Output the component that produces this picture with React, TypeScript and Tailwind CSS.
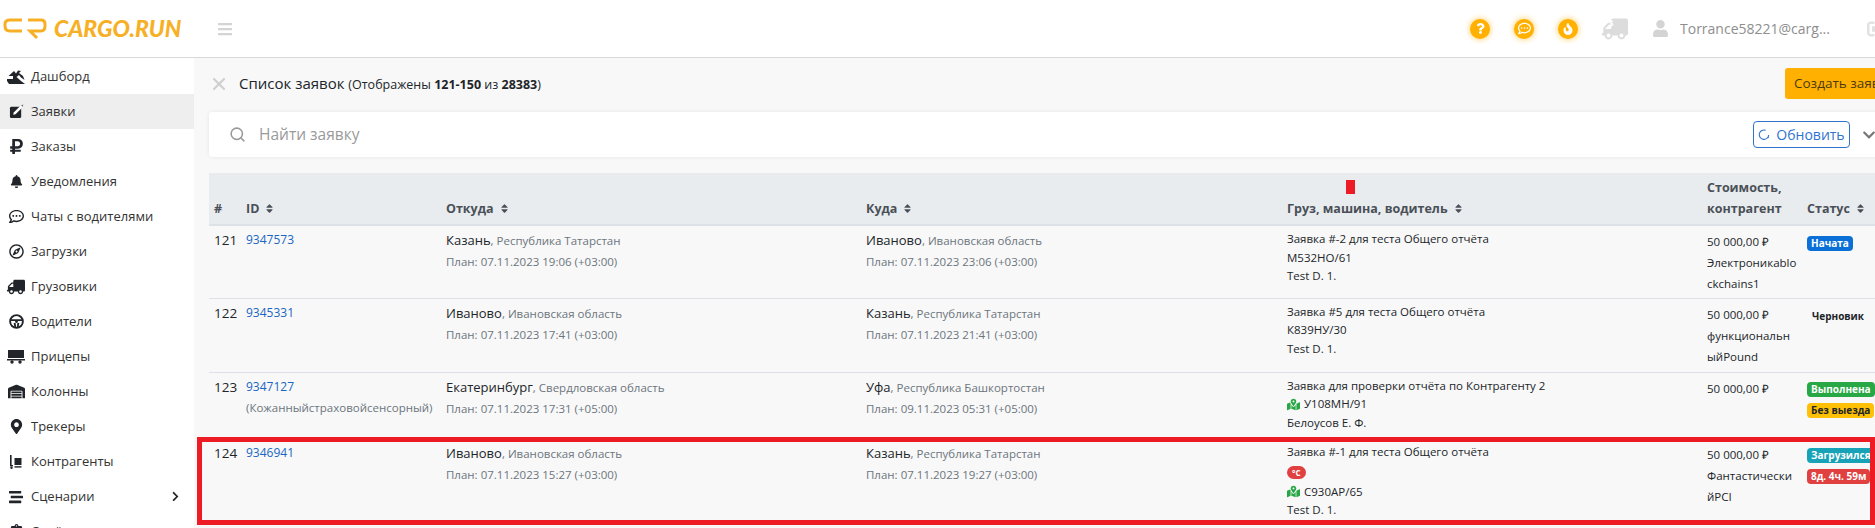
import {
  FaBars,
  FaBell,
  FaChevronDown,
  FaChevronRight,
  FaClipboardList,
  FaFire,
  FaMapMarkedAlt,
  FaMapMarkerAlt,
  FaQuestion,
  FaRegCommentDots,
  FaRegCompass,
  FaRubleSign,
  FaSignOutAlt,
  FaSort,
  FaStream,
  FaTruck,
  FaUser,
  FaWarehouse,
} from "react-icons/fa";
import { Search, X } from "lucide-react";

function DashIcon() {
  return (
    <svg viewBox="0 0 18 14" className="w-[18px] h-[14px]" fill="#212529">
      <path d="M0 9 L6 9 L6 6 L1.5 6 L7 1 L9 3.5 L11 0.5 L14 1 L12 3 L16 6 L17.5 10 L14 7.5 L12 5 L9.5 7 L14 11 L18 14 L2 14 L0 11 Z" />
    </svg>
  );
}

function OrderIcon() {
  return (
    <svg viewBox="0 0 16 16" className="w-[15px] h-[15px]">
      <rect x="1" y="3" width="12" height="12" rx="1.5" fill="#212529" />
      <path d="M4.5 11.5 L5 9 L12.5 1.5 L14.5 3.5 L7 11 Z" fill="#fff" />
      <path d="M12.8 1.2 L15.2 0.6 L14.8 3.2 Z" fill="#777" />
    </svg>
  );
}

function WheelIcon() {
  return (
    <svg viewBox="0 0 16 16" className="w-[15px] h-[15px]" fill="none" stroke="#212529" strokeWidth="2">
      <circle cx="8" cy="8" r="6.8" />
      <path d="M1.5 6.5 H14.5 M6 9.5 L6.8 14.5 M10 9.5 L9.2 14.5" />
      <circle cx="8" cy="8" r="1.5" fill="#212529" stroke="none" />
    </svg>
  );
}

function TrailerIcon() {
  return (
    <svg viewBox="0 0 18 14" className="w-[18px] h-[14px]" fill="#212529">
      <rect x="1" y="0" width="16" height="8" />
      <rect x="0" y="9" width="18" height="1.5" />
      <circle cx="5" cy="12" r="1.7" />
      <circle cx="13" cy="12" r="1.7" />
    </svg>
  );
}

function DollyIcon() {
  return (
    <svg viewBox="0 0 12 14" className="w-[12px] h-[14px]" fill="#212529">
      <rect x="0" y="0" width="1.6" height="10" />
      <rect x="0" y="10" width="3" height="1.4" />
      <rect x="4.5" y="3" width="7" height="7" />
      <rect x="4.5" y="11.2" width="7" height="1.4" />
      <circle cx="1.5" cy="12.8" r="1.2" />
    </svg>
  );
}

const menu = [
  { label: "Дашборд", icon: <DashIcon /> },
  { label: "Заявки", icon: <OrderIcon />, active: true },
  { label: "Заказы", icon: <FaRubleSign className="text-[17px]" /> },
  { label: "Уведомления", icon: <FaBell className="text-[13px]" /> },
  { label: "Чаты с водителями", icon: <FaRegCommentDots className="text-[15px]" /> },
  { label: "Загрузки", icon: <FaRegCompass className="text-[15px]" /> },
  { label: "Грузовики", icon: <FaTruck className="text-[18px] -scale-x-100" /> },
  { label: "Водители", icon: <WheelIcon /> },
  { label: "Прицепы", icon: <TrailerIcon /> },
  { label: "Колонны", icon: <FaWarehouse className="text-[17px]" /> },
  { label: "Трекеры", icon: <FaMapMarkerAlt className="text-[15px]" /> },
  { label: "Контрагенты", icon: <DollyIcon /> },
  { label: "Сценарии", icon: <FaStream className="text-[14px]" />, arrow: true },
  { label: "Отчёты", icon: <FaClipboardList className="text-[15px]" /> },
];

function Place({ city, region, plan }: { city: string; region: string; plan: string }) {
  return (
    <>
      <div className="text-[13px] leading-[20px] text-[#212529]">
        {city}
        <span className="text-[11.5px] text-[#6c757d]">, {region}</span>
      </div>
      <div className="text-[11.5px] leading-[20px] mt-[1px] text-[#6c757d]">План: {plan}</div>
    </>
  );
}

function Head({ label, className = "" }: { label: React.ReactNode; className?: string }) {
  return (
    <th className={`px-[5px] pb-[5px] align-bottom text-left text-[12.5px] leading-[21px] font-bold text-[#495057] ${className}`}>
      {label}
    </th>
  );
}

function Sort() {
  return <FaSort className="inline-block text-[11px] ml-[5px] mb-[2px] text-[#495057]" />;
}

function Badge({ text, className }: { text: string; className: string }) {
  return (
    <div className={`w-fit rounded-[4px] px-[4px] text-[10px] leading-[15px] font-bold mb-[6px] whitespace-nowrap ${className}`}>
      {text}
    </div>
  );
}

function Cargo({ lines, tracked, temp }: { lines: string[]; tracked?: boolean; temp?: boolean }) {
  return (
    <div className="text-[11.5px] leading-[18.5px] text-[#212529]">
      <div>{lines[0]}</div>
      {temp && (
        <div className="h-[21px] flex items-center">
          <span className="rounded-full bg-[#e0403f] text-white text-[8px] font-bold leading-[13px] px-[5px]">°C</span>
        </div>
      )}
      <div className="flex items-center">
        {tracked && <FaMapMarkedAlt className="text-[13px] text-[#28a745] mr-[4px]" />}
        {lines[1]}
      </div>
      <div>{lines[2]}</div>
    </div>
  );
}

function Cost({ lines }: { lines: string[] }) {
  return (
    <div className="text-[11.5px] leading-[21px] text-[#212529] break-all pt-[1px]">
      {lines.map((l) => (
        <div key={l}>{l}</div>
      ))}
    </div>
  );
}

const cell = "px-[5px] align-top pt-[4px]";

export default function App() {
  return (
    <div className="relative w-[1875px] h-[528px] overflow-hidden bg-[#f8f8f8] font-['Open_Sans',sans-serif] text-[#212529]">
      <header className="h-[58px] bg-white border-b border-[#d9d9d9] flex items-center">
        <svg viewBox="0 0 46 24" className="w-[46px] h-[24px] ml-[3px]" fill="none" stroke="#f7b025" strokeWidth="3">
          <path d="M19 3 H7 Q2 3 2 7 V9 Q2 14 7 14 H19" />
          <path d="M25 3 H38 Q42 3 42 7 V9 Q42 14 38 14 H27 L34 21" />
        </svg>
        <span className="ml-[5px] w-[131px] font-['Lato',sans-serif] italic font-black text-[23px] text-[#f7b025] whitespace-nowrap">
          CARGO.RUN
        </span>
        <FaBars className="ml-[32px] text-[16px] text-[#d4d4d4]" />

        <div className="ml-auto flex items-center">
          <div className="w-[20px] h-[20px] rounded-full bg-[#ffb000] shadow-[0_0_6px_#ffc64d] flex items-center justify-center">
            <FaQuestion className="text-white text-[11px]" />
          </div>
          <div className="ml-[24px] w-[20px] h-[20px] rounded-full bg-[#ffb000] shadow-[0_0_6px_#ffc64d] flex items-center justify-center">
            <FaRegCommentDots className="text-white text-[13px]" />
          </div>
          <div className="ml-[24px] w-[20px] h-[20px] rounded-full bg-[#ffb000] shadow-[0_0_6px_#ffc64d] flex items-center justify-center">
            <FaFire className="text-white text-[12px]" />
          </div>
          <div className="ml-[24px] relative">
            <FaTruck className="text-[26px] text-[#dcdcdc] -scale-x-100" />
            <span className="absolute left-[7px] top-[3px] text-[8px] font-bold leading-[10px] text-white">$</span>
          </div>
          <FaUser className="ml-[24px] text-[17px] text-[#d4d4d4]" />
          <span className="ml-[11px] w-[152px] text-[14px] text-[#8e8e8e] whitespace-nowrap">Torrance58221@carg...</span>
          <FaSignOutAlt className="ml-[35px] -mr-[12px] text-[20px] text-[#e2e2e2]" />
        </div>
      </header>

      <div className="flex">
        <aside className="w-[194px] h-[470px] shrink-0 bg-white pt-[1px] overflow-hidden">
          {menu.map((m) => (
            <div
              key={m.label}
              className={`relative h-[35px] flex items-center text-[13px] text-[#333] ${m.active ? "bg-[#eeeeee]" : ""}`}
            >
              <span className="w-[31px] shrink-0 flex justify-center pl-[1px] text-[#212529]">{m.icon}</span>
              {m.label}
              {m.arrow && <FaChevronRight className="absolute left-[170px] text-[11px] text-[#212529]" />}
            </div>
          ))}
        </aside>

        <main className="pl-[15px] w-[1711px] shrink-0">
          <div className="h-[31px] mt-[10px] flex items-center">
            <X className="w-[20px] h-[20px] text-[#cfcfcf]" strokeWidth={2.5} />
            <h1 className="ml-[10px] text-[15px] text-[#212529]">
              Список заявок{" "}
              <span className="text-[12.5px]">
                (Отображены <b className="text-[12.5px]">121-150</b> из <b className="text-[12.5px]">28383</b>)
              </span>
            </h1>
            <button className="ml-auto w-[120px] h-[31px] rounded-[3px] bg-[#ffb000] text-left pl-[9px] text-[13.5px] text-[#4d3b10] whitespace-nowrap">
              Создать заявку
            </button>
          </div>

          <div className="mt-[13px] h-[45px] bg-white rounded-[3px] shadow-[0_0_4px_rgba(0,0,0,0.08)] flex items-center pl-[20px] pr-[29px]">
            <Search className="w-[17px] h-[17px] text-[#999]" strokeWidth={2.2} />
            <span className="ml-[13px] text-[15.5px] text-[#9a9a9a]">Найти заявку</span>
            <button className="ml-auto w-[97px] h-[27px] rounded-[4px] border border-[#2f73cf] text-[#2f73cf] text-[14px] flex items-center justify-center gap-[6px]">
              <svg viewBox="0 0 14 14" className="w-[12px] h-[12px]" fill="none" stroke="#2f73cf" strokeWidth="1.3">
                <path d="M9 1.5 A5.5 5.5 0 1 0 12.5 7" />
                <circle cx="12.2" cy="9.5" r="0.7" fill="#2f73cf" stroke="none" />
              </svg>
              Обновить
            </button>
            <FaChevronDown className="ml-[12px] text-[14px] text-[#777]" />
          </div>

          <table className="mt-[16px] table-fixed border-collapse w-[1696px]">
            <colgroup>
              <col className="w-[32px]" />
              <col className="w-[200px]" />
              <col className="w-[420px]" />
              <col className="w-[421px]" />
              <col className="w-[420px]" />
              <col className="w-[100px]" />
              <col className="w-[103px]" />
            </colgroup>
            <thead>
              <tr className="h-[52px] bg-[#e9ecef] border-b-2 border-[#dee2e6]">
                <Head label="#" />
                <Head label={<>ID<Sort /></>} />
                <Head label={<>Откуда<Sort /></>} />
                <Head label={<>Куда<Sort /></>} />
                <Head label={<>Груз, машина, водитель<Sort /></>} />
                <Head label={<>Стоимость,<br />контрагент</>} />
                <Head label={<>Статус<Sort /></>} />
              </tr>
            </thead>
            <tbody>
              <tr className="h-[73px] border-b border-[#dee2e6]">
                <td className={`${cell} text-[13.5px]`}>121</td>
                <td className={`${cell} text-[12px] leading-[20px] text-[#1a66c0]`}>9347573</td>
                <td className={cell}>
                  <Place city="Казань" region="Республика Татарстан" plan="07.11.2023 19:06 (+03:00)" />
                </td>
                <td className={cell}>
                  <Place city="Иваново" region="Ивановская область" plan="07.11.2023 23:06 (+03:00)" />
                </td>
                <td className={cell}>
                  <Cargo lines={["Заявка #-2 для теста Общего отчёта", "М532НО/61", "Test D. 1."]} />
                </td>
                <td className={cell}>
                  <Cost lines={["50 000,00 ₽", "Электроникаblockchains1"]} />
                </td>
                <td className={cell}>
                  <Badge text="Начата" className="bg-[#0b6fd8] text-white mt-[6px]" />
                </td>
              </tr>
              <tr className="h-[74px] border-b border-[#dee2e6]">
                <td className={`${cell} text-[13.5px]`}>122</td>
                <td className={`${cell} text-[12px] leading-[20px] text-[#1a66c0]`}>9345331</td>
                <td className={cell}>
                  <Place city="Иваново" region="Ивановская область" plan="07.11.2023 17:41 (+03:00)" />
                </td>
                <td className={cell}>
                  <Place city="Казань" region="Республика Татарстан" plan="07.11.2023 21:41 (+03:00)" />
                </td>
                <td className={cell}>
                  <Cargo lines={["Заявка #5 для теста Общего отчёта", "К839НУ/30", "Test D. 1."]} />
                </td>
                <td className={cell}>
                  <Cost lines={["50 000,00 ₽", "функциональныйPound"]} />
                </td>
                <td className={cell}>
                  <Badge text="Черновик" className="text-[#212529] mt-[6px] ml-[1px]" />
                </td>
              </tr>
              <tr className="h-[67px]">
                <td className={`${cell} text-[13.5px]`}>123</td>
                <td className={`${cell} text-[12px] leading-[20px] text-[#1a66c0]`}>
                  9347127
                  <div className="mt-[1px] text-[11.5px] text-[#6c757d] whitespace-nowrap">(Кожанныйстраховойсенсорный)</div>
                </td>
                <td className={cell}>
                  <Place city="Екатеринбург" region="Свердловская область" plan="07.11.2023 17:31 (+05:00)" />
                </td>
                <td className={cell}>
                  <Place city="Уфа" region="Республика Башкортостан" plan="09.11.2023 05:31 (+05:00)" />
                </td>
                <td className={cell}>
                  <Cargo tracked lines={["Заявка для проверки отчёта по Контрагенту 2", "У108МН/91", "Белоусов Е. Ф."]} />
                </td>
                <td className={cell}>
                  <Cost lines={["50 000,00 ₽"]} />
                </td>
                <td className={cell}>
                  <Badge text="Выполнена" className="bg-[#28a745] text-white mt-[5px]" />
                  <Badge text="Без выезда" className="bg-[#ffc107] text-[#212529]" />
                </td>
              </tr>
              <tr className="h-[88px]">
                <td className={`${cell} text-[13.5px]`}>124</td>
                <td className={`${cell} text-[12px] leading-[20px] text-[#1a66c0]`}>9346941</td>
                <td className={cell}>
                  <Place city="Иваново" region="Ивановская область" plan="07.11.2023 15:27 (+03:00)" />
                </td>
                <td className={cell}>
                  <Place city="Казань" region="Республика Татарстан" plan="07.11.2023 19:27 (+03:00)" />
                </td>
                <td className={cell}>
                  <Cargo tracked temp lines={["Заявка #-1 для теста Общего отчёта", "С930АР/65", "Test D. 1."]} />
                </td>
                <td className={cell}>
                  <Cost lines={["50 000,00 ₽", "ФантастическийPCI"]} />
                </td>
                <td className={cell}>
                  <Badge text="Загрузился" className="bg-[#17a2b8] text-white mt-[5px]" />
                  <Badge text="8д. 4ч. 59м" className="bg-[#e0403f] text-white" />
                </td>
              </tr>
            </tbody>
          </table>
        </main>
      </div>

      {/* red marks drawn over the screenshot */}
      <div className="absolute left-[1346px] top-[180px] w-[9px] h-[14px] bg-[#ed1c24]" />
      <div className="absolute left-[197px] top-[437px] w-[1678px] h-[88px] border-[5px] border-[#ed1c24]" />
    </div>
  );
}
